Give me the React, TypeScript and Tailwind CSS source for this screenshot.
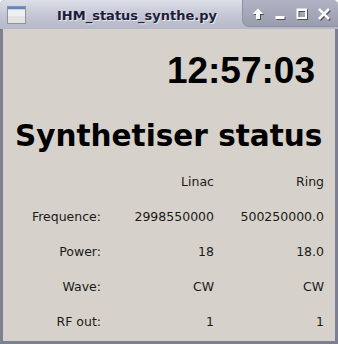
import React from "react";

const rows: [string, string, string][] = [
  ["Frequence:", "2998550000", "500250000.0"],
  ["Power:", "18", "18.0"],
  ["Wave:", "CW", "CW"],
  ["RF out:", "1", "1"],
];

function AppIcon() {
  return (
    <svg width="19" height="18" viewBox="0 0 19 18">
      <rect x="0.5" y="0.5" width="18" height="17" fill="#eef0f0" stroke="#8e929e" />
      <rect x="1" y="1" width="17" height="2" fill="#5f86c6" />
      <rect x="1" y="3" width="17" height="1" fill="#c8d2e4" />
      <rect x="1" y="10" width="17" height="7" fill="#e2e4e2" />
    </svg>
  );
}

function Buttons() {
  const s = { filter: "drop-shadow(1px 1px 0 #4a4d5c)" } as React.CSSProperties;
  return (
    <div className="flex items-center h-full pl-[9px] pt-[1px]">
      <svg width="12" height="12" viewBox="0 0 12 12" style={s} className="mr-[11px]">
        <path d="M6 0.5 L11.5 6 L8 6 L8 11 L4 11 L4 6 L0.5 6 Z" fill="#ffffff" />
      </svg>
      <svg width="10" height="12" viewBox="0 0 10 12" style={s} className="mr-[11px]">
        <rect x="0.5" y="8" width="9" height="3" fill="#ffffff" />
      </svg>
      <svg width="12" height="12" viewBox="0 0 12 12" style={s} className="mr-[10px]">
        <path d="M0.5 0.5 H11 V11 H0.5 Z M2.5 3 V9 H9 V3 Z" fill="#ffffff" fillRule="evenodd" />
      </svg>
      <svg width="12" height="12" viewBox="0 0 12 12" style={s}>
        <path d="M1 1 L11 11 M11 1 L1 11" stroke="#ffffff" strokeWidth="2.6" />
      </svg>
    </div>
  );
}

export default function App() {
  return (
    <div className="w-[338px] h-[344px] flex flex-col bg-[#7d8090] overflow-hidden rounded-t-[5px]">
      <div className="h-[29px] flex shrink-0 bg-gradient-to-b from-[#dcdee8] via-[#c5c7d5] to-[#b5b8c8]">
        <div className="flex-1 flex items-start pl-[7px]">
          <div className="mt-[6px]">
            <AppIcon />
          </div>
          <div
            className="ml-[31px] mt-[8px] text-[13px] leading-[16px] font-bold text-[#1d1d3a] [text-shadow:1px_1px_0_#ffffffa0]"
            style={{ fontFamily: '"DejaVu Sans", sans-serif' }}
          >
            IHM_status_synthe.py
          </div>
        </div>
        <div className="w-[96px] h-[27px] rounded-bl-[7px] bg-gradient-to-b from-[#b0b3c3] to-[#9a9daf] border-l border-b border-[#8f92a3]">
          <Buttons />
        </div>
      </div>
      <div className="flex-1 mx-[3px] mb-[3px] bg-[#d6d2cb] flex flex-col text-black">
        <div
          className="mt-[23px] h-[37px] leading-[37px] text-[37px] font-bold text-right pr-[20px]"
          style={{ fontFamily: '"Liberation Sans", Arial, sans-serif' }}
        >
          12:57:03
        </div>
        <div
          className="mt-[33px] h-[30px] leading-[29.5px] text-[29.5px] font-bold pl-[12px] whitespace-nowrap"
          style={{ fontFamily: '"DejaVu Sans", sans-serif' }}
        >
          Synthetiser status
        </div>
        <div
          className="mt-[12px] grid grid-cols-[98px_113px_110px] auto-rows-[35px] text-[12.5px] leading-[15px] text-[#1a1a1a]"
          style={{ fontFamily: '"DejaVu Sans", sans-serif' }}
        >
          <div />
          <div className="flex items-center justify-end">Linac</div>
          <div className="flex items-center justify-end">Ring</div>
          {rows.map(([a, b, c]) => (
            <React.Fragment key={a}>
              <div className="flex items-center justify-end">{a}</div>
              <div className="flex items-center justify-end">{b}</div>
              <div className="flex items-center justify-end">{c}</div>
            </React.Fragment>
          ))}
        </div>
      </div>
    </div>
  );
}
